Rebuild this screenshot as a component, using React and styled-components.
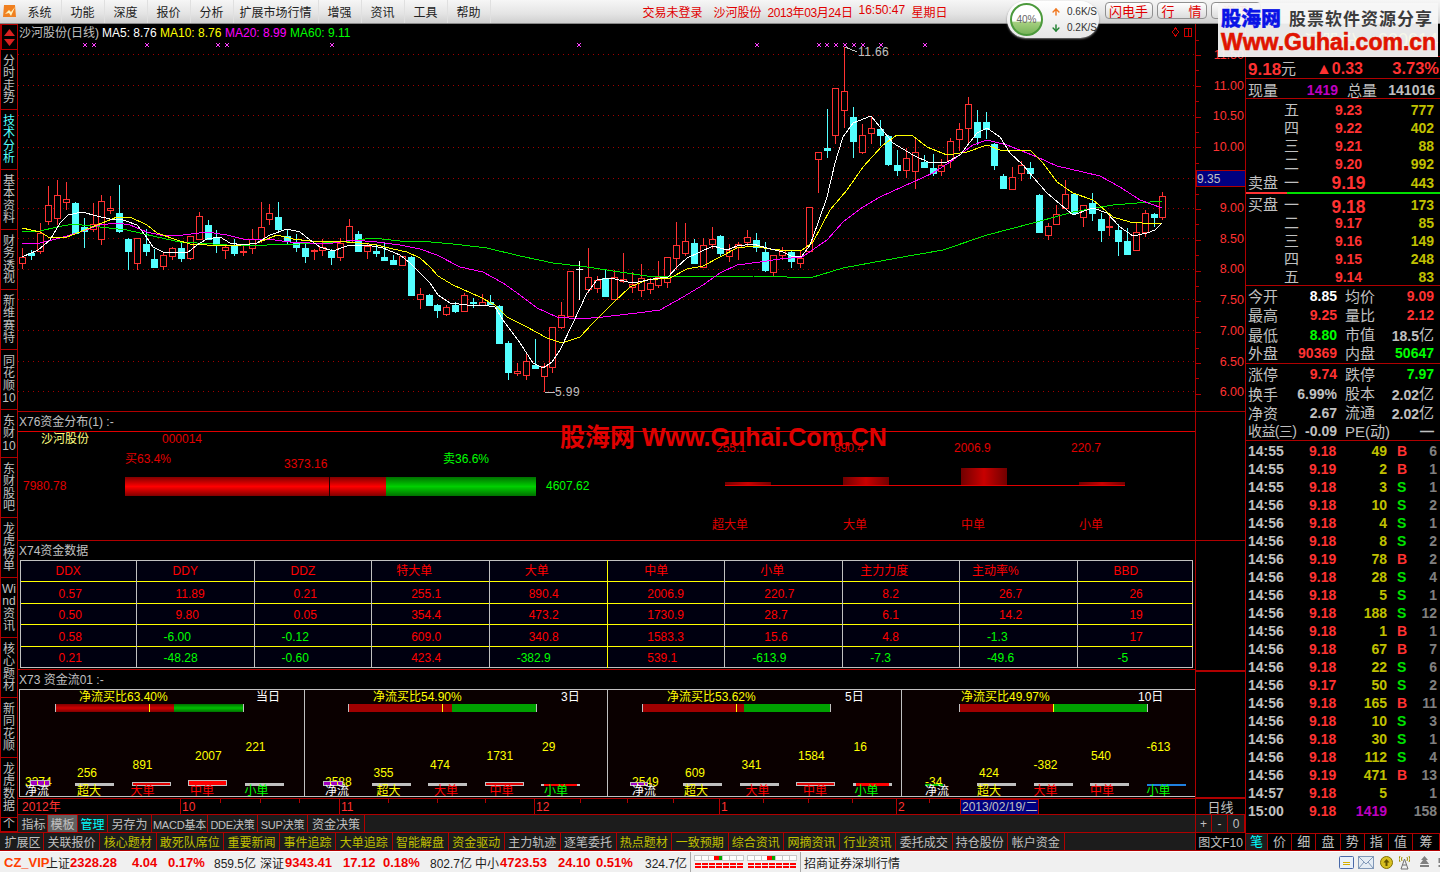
import styled, { createGlobalStyle } from "styled-components";
import { ArrowUp, ArrowDown } from "lucide-react";

const LINE = "#b00000";
const RED = "#ff3232";
const CYAN = "#54ffff";
const GREY = "#c0c0c0";
const OLIVE = "#c0c000";

// [x, wickTop, bodyTop, bodyBottom, wickBottom, red?]
const CANDLES = [
  [22, 248, 257, 263, 269, 1], [31, 250, 252, 255, 260, 0], [40, 223, 233, 251, 254, 1], [48, 186, 205, 221, 225, 1],
  [57, 180, 195, 218, 225, 1], [66, 182, 199, 202, 210, 1], [75, 202, 202, 233, 233, 0], [84, 218, 226, 231, 248, 0],
  [93, 203, 224, 229, 232, 1], [101, 195, 201, 239, 245, 1], [110, 196, 208, 210, 214, 1], [119, 185, 212, 231, 233, 0],
  [128, 238, 238, 251, 270, 0], [137, 238, 238, 263, 270, 1], [146, 229, 243, 251, 256, 0], [154, 249, 258, 267, 268, 0],
  [163, 252, 255, 266, 270, 1], [172, 247, 248, 256, 260, 1], [181, 243, 247, 258, 262, 0], [190, 236, 236, 258, 260, 1],
  [199, 212, 216, 239, 240, 1], [208, 220, 224, 239, 240, 0], [216, 230, 237, 244, 253, 0], [225, 245, 247, 250, 259, 1],
  [234, 239, 244, 253, 256, 0], [243, 245, 251, 252, 256, 1], [252, 229, 239, 248, 254, 1], [261, 202, 227, 239, 243, 1],
  [269, 204, 213, 219, 225, 1], [278, 202, 216, 229, 232, 0], [287, 230, 235, 241, 245, 0], [296, 234, 241, 247, 252, 0],
  [305, 243, 247, 256, 263, 0], [314, 249, 250, 251, 260, 1], [322, 239, 247, 250, 256, 1], [331, 249, 250, 257, 265, 0],
  [340, 238, 243, 257, 261, 1], [349, 219, 226, 242, 243, 1], [358, 231, 233, 251, 251, 0], [367, 243, 246, 251, 259, 1],
  [376, 245, 250, 253, 257, 0], [384, 242, 256, 260, 261, 0], [393, 255, 259, 264, 265, 0], [402, 256, 256, 265, 265, 1],
  [411, 256, 256, 295, 295, 0], [420, 288, 294, 299, 309, 1], [429, 294, 294, 305, 305, 0], [437, 304, 304, 310, 318, 0],
  [446, 305, 307, 314, 316, 1], [455, 302, 304, 311, 313, 0], [464, 293, 295, 311, 312, 1], [473, 298, 301, 303, 308, 0],
  [482, 294, 302, 305, 306, 1], [490, 295, 301, 304, 305, 0], [499, 305, 305, 343, 343, 0], [508, 341, 342, 372, 380, 0],
  [517, 363, 371, 373, 376, 1], [526, 353, 361, 375, 380, 1], [535, 339, 364, 368, 368, 0], [544, 363, 366, 376, 392, 1],
  [552, 327, 327, 367, 373, 1], [561, 302, 315, 327, 329, 1], [570, 271, 271, 316, 316, 1], [588, 248, 277, 289, 293, 1],
  [597, 276, 280, 288, 293, 1], [605, 270, 277, 296, 297, 0], [614, 270, 277, 299, 299, 1], [623, 253, 279, 281, 283, 1],
  [632, 272, 284, 287, 293, 1], [641, 264, 278, 290, 297, 1], [650, 278, 283, 289, 294, 1], [658, 261, 277, 285, 288, 1],
  [667, 257, 257, 282, 288, 1], [676, 222, 245, 258, 270, 1], [685, 223, 241, 253, 256, 1], [694, 239, 242, 263, 263, 0],
  [703, 238, 245, 267, 267, 1], [712, 227, 239, 244, 249, 1], [720, 235, 235, 253, 257, 0], [729, 244, 250, 256, 262, 1],
  [738, 242, 244, 247, 260, 1], [747, 230, 237, 242, 247, 1], [756, 233, 239, 247, 252, 0], [765, 242, 251, 270, 272, 0],
  [773, 255, 255, 272, 277, 1], [782, 247, 250, 255, 260, 1], [791, 250, 251, 261, 268, 0], [800, 250, 258, 263, 268, 1],
  [809, 207, 207, 251, 252, 1], [818, 152, 152, 159, 193, 1], [827, 109, 147, 150, 158, 0], [835, 88, 88, 135, 144, 1],
  [844, 47, 91, 110, 128, 1], [853, 107, 116, 141, 158, 0], [862, 124, 135, 152, 154, 1], [871, 117, 128, 133, 144, 1],
  [880, 120, 128, 135, 146, 0], [888, 135, 135, 164, 166, 0], [897, 150, 164, 170, 176, 0], [906, 148, 158, 170, 178, 1],
  [915, 137, 152, 171, 189, 1], [924, 155, 161, 167, 168, 0], [933, 154, 167, 173, 176, 0], [941, 159, 165, 171, 176, 1],
  [950, 138, 141, 160, 168, 1], [959, 123, 129, 139, 151, 1], [968, 97, 104, 128, 143, 1], [977, 110, 121, 137, 145, 0],
  [986, 112, 121, 129, 139, 0], [994, 143, 143, 165, 170, 0], [1003, 174, 175, 188, 189, 0], [1012, 167, 177, 189, 189, 1],
  [1021, 161, 165, 173, 181, 1], [1030, 162, 167, 173, 179, 0], [1039, 194, 194, 232, 232, 0], [1048, 223, 226, 235, 240, 1],
  [1056, 205, 214, 224, 225, 1], [1065, 180, 194, 208, 208, 1], [1074, 193, 193, 213, 215, 0], [1083, 205, 205, 217, 227, 1],
  [1092, 193, 202, 213, 221, 0], [1101, 213, 218, 230, 242, 0], [1109, 213, 226, 227, 236, 1], [1118, 224, 229, 241, 256, 0],
  [1127, 228, 240, 254, 254, 0], [1136, 222, 232, 250, 251, 1], [1145, 210, 213, 232, 237, 1], [1154, 213, 213, 217, 227, 0],
  [1162, 192, 196, 217, 220, 1],
];

const MA5 = "22,257 38,250 50,240 60,223 68,215 82,212 97,216 110,219 123,220 137,225 145,235 153,247 163,252 177,252 187,253 197,245 207,239 220,237 230,243 243,245 257,243 270,235 287,229 300,232 310,240 320,247 333,251 347,246 367,245 383,248 400,255 410,263 420,273 430,283 438,295 450,303 467,305 483,305 495,307 503,320 520,343 533,363 543,368 552,362 560,350 573,323 587,293 597,280 610,278 633,283 653,279 668,277 677,267 687,258 700,252 713,246 727,250 737,246 753,244 767,248 783,252 793,257 802,256 810,245 818,223 827,197 835,163 843,137 853,123 871,116 880,127 893,143 913,155 930,163 947,162 960,155 977,133 987,128 1000,137 1010,153 1023,165 1033,177 1047,193 1073,215 1093,208 1107,213 1120,227 1133,236 1147,233 1155,230 1162,223";
const MA10 = "22,228 40,232 50,238 67,237 80,232 97,225 117,217 130,217 147,225 157,233 177,240 190,244 207,245 233,246 257,243 277,235 293,239 310,241 333,241 360,243 377,245 393,249 407,252 420,258 430,267 438,276 453,285 480,297 495,305 507,317 527,327 547,338 562,343 580,337 593,323 613,303 630,287 647,280 670,278 687,269 703,266 720,257 737,248 753,246 770,249 790,251 802,250 813,242 830,210 847,190 863,167 883,145 897,135 913,136 927,147 947,155 967,152 987,145 1000,150 1030,150 1043,163 1057,182 1073,193 1093,200 1113,217 1130,222 1153,224 1162,223";
const MA20 = "22,243 40,243 60,238 80,232 100,225 117,223 130,225 147,232 160,235 183,235 207,232 227,235 243,239 267,239 290,242 310,243 333,243 353,240 377,242 400,245 420,249 437,255 460,267 483,272 503,283 520,295 537,308 557,317 580,319 603,317 637,313 660,310 683,297 703,285 720,273 737,265 760,262 780,259 802,257 827,240 843,222 863,207 880,197 913,182 933,173 953,160 973,145 987,140 1007,145 1037,157 1057,166 1083,172 1100,176 1120,187 1140,200 1162,208";
const MA60 = "22,232 40,231 57,227 73,224 100,227 127,230 157,237 180,242 213,244 240,246 267,245 300,244 323,243 350,241 373,238 400,241 420,241 453,244 487,248 520,256 553,263 587,267 620,272 647,276 687,276 753,276 787,277 810,278 843,268 897,258 943,250 987,235 1033,223 1073,212 1113,205 1162,201";

const GRID_Y = [54, 85, 115, 147, 178, 208, 238, 269, 299, 330, 361, 391];
const MARKS = [85, 94, 147, 218, 227, 332, 579, 757, 819, 827, 836, 845, 854, 863, 881, 925];
const AXIS_LABELS = [["11.50", 55], ["11.00", 86], ["10.50", 116], ["10.00", 147], ["9.00", 208], ["8.50", 239], ["8.00", 269], ["7.50", 300], ["7.00", 331], ["6.50", 362], ["6.00", 392]];

const RAIL = [
  { chars: ["分", "时", "走", "势"] },
  { chars: ["技", "术", "分", "析"], active: true },
  { chars: ["基", "本", "资", "料"] },
  { chars: ["财", "务", "透", "视"] },
  { chars: ["新", "维", "赛", "特"] },
  { chars: ["同", "花", "顺", "10"] },
  { chars: ["东", "财", "10"], h: 48 },
  { chars: ["东", "财", "股", "吧"] },
  { chars: ["龙", "虎", "榜", "单"] },
  { chars: ["Wi", "nd", "资", "讯"] },
  { chars: ["核", "心", "题", "材"] },
  { chars: ["新", "同", "花", "顺"] },
  { chars: ["龙", "虎", "数", "据"] },
  { chars: ["个"], h: 14 },
];

const COL_WIDTHS = [116, 118, 117.5, 117.5, 118.5, 117, 118, 116.5, 118.5, 114.5];
const HEAD = [["DDX", 35], ["DDY", 36], ["DDZ", 36], ["特大单", 24], ["大单", 35], ["中单", 36], ["小单", 35], ["主力力度", 17], ["主动率%", 12], ["BBD", 35]];
const ROWS = [
  ["0.57", "11.89", "0.21", "255.1", "890.4", "2006.9", "220.7", "8.2", "26.7", "26"],
  ["0.50", "9.80", "0.05", "354.4", "473.2", "1730.9", "28.7", "6.1", "14.2", "19"],
  ["0.58", "-6.00", "-0.12", "609.0", "340.8", "1583.3", "15.6", "4.8", "-1.3", "17"],
  ["0.21", "-48.28", "-0.60", "423.4", "-382.9", "539.1", "-613.9", "-7.3", "-49.6", "-5"],
];

const FLOW = [
  { name: "超大单", value: "255.1", h: 3, dx: -13, vdx: -9 },
  { name: "大单", value: "890.4", h: 8, dx: 0, vdx: -9 },
  { name: "中单", value: "2006.9", h: 17, dx: 0, vdx: -7 },
  { name: "小单", value: "220.7", h: 3, dx: 0, vdx: -8 },
];

const CENTERS = [781, 772, 764, 755, 746];
const NAMES = [["净流", "#fff"], ["超大", "#ffff00"], ["大单", "#ff0000"], ["中单", "#ff0000"], ["小单", "#00ff00"]];
const CELLS = [
  {
    title: "净流买比63.40%", day: "当日", titleX: 59, titleW: 177, barX: 35, red: 118, grad: true, pad: 5, first: 32.5, cols: [
      { v: "3374", vdx: 0, ldx: 0, bdx: 5, bw: 20, h: 6, kind: "net" },
      { v: "256", vdx: 2, ldx: 2, h: 3, kind: "grey" }, { v: "891", vdx: 1, ldx: -1, h: 4, kind: "outline" },
      { v: "2007", vdx: 7, ldx: 2, h: 6, kind: "fill" }, { v: "221", vdx: 1, ldx: 0, h: 3, kind: "grey" }],
  },
  {
    title: "净流买比54.90%", day: "3日", titleX: 68, titleW: 188, barX: 43, red: 103, pad: 20, first: 29, cols: [
      { v: "2588", vdx: 0, ldx: 0, bdx: -2, bw: 20, h: 5, kind: "net" },
      { v: "355", vdx: 2, ldx: 5, h: 3, kind: "grey" }, { v: "474", vdx: 2, ldx: 6, h: 3, kind: "grey" },
      { v: "1731", vdx: 2, ldx: 5, h: 4, kind: "outline" }, { v: "29", vdx: 1, ldx: 3, h: 2, kind: "line" }],
  },
  {
    title: "净流买比53.62%", day: "5日", titleX: 59, titleW: 178, barX: 34, red: 101, pad: 24, first: 33.5, cols: [
      { v: "2549", vdx: 0, ldx: 0, bdx: -2, bw: 18, h: 4, kind: "net" },
      { v: "609", vdx: 2, ldx: 1, h: 3, kind: "grey" }, { v: "341", vdx: 2, ldx: 6, h: 3, kind: "grey" },
      { v: "1584", vdx: 2, ldx: 7, h: 4, kind: "outline" }, { v: "16", vdx: 1, ldx: 2, h: 3, kind: "line" }],
  },
  {
    title: "净流买比49.97%", day: "10日", titleX: 59, titleW: 177, barX: 57, red: 94, pad: 23, first: 34.5, cols: [
      { v: "-34", vdx: 0, ldx: 0, bdx: 0, bw: 18, h: 2, kind: "netline" },
      { v: "424", vdx: 2, ldx: 0, h: 3, kind: "grey" }, { v: "-382", vdx: 0, ldx: 0, h: 3, kind: "grey" },
      { v: "540", vdx: 1, ldx: 0, h: 3, kind: "grey" }, { v: "-613", vdx: 0, ldx: 0, h: 2, kind: "blue" }],
  },
];

const TOOLS = [["指标", 28], ["模板", 30, "on"], ["管理", 30, "cyan"], ["另存为", 44], ["MACD基本", 56, "small"], ["DDE决策", 50, "small"], ["SUP决策", 50, "small"], ["资金决策", 57]];
const EXT = [["扩展区", 42], ["关联报价", 56], ["核心题材", 56.5, 1], ["敢死队席位", 67.5, 1], ["重要新闻", 56, 1], ["事件追踪", 56, 1], ["大单追踪", 56.5, 1], ["智能解盘", 56, 1], ["资金驱动", 56.5, 1], ["主力轨迹", 55.5], ["逐笔委托", 56], ["热点题材", 55.5, 1], ["一致预期", 56.5, 1], ["综合资讯", 55.5, 1], ["网摘资讯", 56, 1], ["行业资讯", 56, 1], ["委托成交", 56.5], ["持仓股份", 55.5], ["帐户资金", 56.5]];

const SELL = [["五", "9.23", "777"], ["四", "9.22", "402"], ["三", "9.21", "88"], ["二", "9.20", "992"]];
const BUY = [["二", "9.17", "85"], ["三", "9.16", "149"], ["四", "9.15", "248"], ["五", "9.14", "83"]];

const TRADES = [
  ["14:55", "9.18", "49", "B", "6"], ["14:55", "9.19", "2", "B", "1"], ["14:55", "9.18", "3", "S", "1"], ["14:56", "9.18", "10", "S", "2"],
  ["14:56", "9.18", "4", "S", "1"], ["14:56", "9.18", "8", "S", "2"], ["14:56", "9.19", "78", "B", "2"], ["14:56", "9.18", "28", "S", "4"],
  ["14:56", "9.18", "5", "S", "1"], ["14:56", "9.18", "188", "S", "12"], ["14:56", "9.18", "1", "B", "1"], ["14:56", "9.18", "67", "B", "7"],
  ["14:56", "9.18", "22", "S", "6"], ["14:56", "9.17", "50", "S", "2"], ["14:56", "9.18", "165", "B", "11"], ["14:56", "9.18", "10", "S", "3"],
  ["14:56", "9.18", "30", "S", "1"], ["14:56", "9.18", "112", "S", "4"], ["14:56", "9.19", "471", "B", "13"], ["14:57", "9.18", "5", "", "1"],
  ["15:00", "9.18", "1419", "", "158"],
];

const STATUS = [
  ["CZ_VIP", 42, "vip"], ["上证", 24], ["2328.28", 62, "red"], ["4.04", 36, "red"], ["0.17%", 46, "red"], ["859.5亿", 46],
  ["深证", 25], ["9343.41", 58, "red"], ["17.12", 40, "red"], ["0.18%", 47, "red"], ["802.7亿", 45],
  ["中小", 25], ["4723.53", 58, "red"], ["24.10", 38, "red"], ["0.51%", 49, "red"], ["324.7亿", 45],
];

const GlobalStyle = createGlobalStyle`
  html, body { margin: 0; padding: 0; background: #000; }
  * { box-sizing: border-box; }
  body { font-family: "Liberation Sans", "Noto Sans CJK SC", sans-serif; font-size: 12px; }
`;

const Root = styled.div`
  position: relative;
  width: 1440px;
  height: 872px;
  overflow: hidden;
  display: flex;
  flex-direction: column;
  background: #000;
  color: ${GREY};
`;

/* ---------- top menu ---------- */
const MenuBar = styled.div`
  height: 24px;
  flex: none;
  display: flex;
  align-items: center;
  background: linear-gradient(#f6f6f6, #e4e4e4 60%, #cfcfcf);
  border-bottom: 1px solid #888;
  color: #222;
`;
const AppIcon = styled.div`
  width: 18.5px;
  flex: none;
  display: flex;
  justify-content: center;
`;
const MenuItem = styled.div`
  width: ${(p) => p.$w || 43}px;
  height: 100%;
  flex: none;
  display: flex;
  align-items: center;
  justify-content: center;
  border-right: 1px solid #e0e0e0;
`;
const MenuStatus = styled.div`
  width: 305px;
  margin-left: 152px;
  flex: none;
  display: flex;
  color: #e00000;
  white-space: nowrap;
`;
const MenuStat = styled.span`
  width: ${(p) => p.$w}px;
  flex: none;
  letter-spacing: ${(p) => p.$ls || 0}px;
`;
const QuickButton = styled.div`
  width: ${(p) => p.$w}px;
  height: 17px;
  margin-left: ${(p) => p.$ml}px;
  margin-bottom: 3px;
  flex: none;
  display: flex;
  align-items: center;
  justify-content: center;
  gap: ${(p) => p.$gap || 0}px;
  border: 1px solid #909090;
  border-radius: 4px;
  background: linear-gradient(#ffffff, #dcdcdc);
  color: #e00000;
  font-size: 13px;
`;
const SpeedWidget = styled.div`
  position: absolute;
  left: 1007px;
  top: 1px;
  width: 92px;
  height: 37px;
  z-index: 3;
  display: flex;
  align-items: center;
  gap: 4px;
  padding-left: 3px;
  border-radius: 19px;
  background: linear-gradient(#ffffff, #e6e6e6);
  box-shadow: 0 1px 2px #777;
  color: #333;
  font-size: 10px;
`;
const SpeedDial = styled.div`
  width: 33px;
  height: 33px;
  flex: none;
  display: flex;
  align-items: center;
  justify-content: center;
  border: 2px solid #4c9a3c;
  border-radius: 50%;
  background: linear-gradient(#fff 55%, #a6d080 60%, #78b45a);
  color: #666;
  font-size: 10px;
`;
const SpeedRows = styled.div`
  display: flex;
  flex-direction: column;
  gap: 4px;
`;
const SpeedRow = styled.div`
  display: flex;
  align-items: center;
  gap: 6px;
  height: 12px;
  padding-left: 4px;
`;
const Watermark = styled.div`
  position: absolute;
  left: 1218px;
  top: 3px;
  width: 220px;
  height: 54px;
  z-index: 4;
  padding: 5px 3px 0;
  background: rgba(246, 246, 246, 0.94);
`;
const WatermarkTop = styled.div`
  display: flex;
  align-items: center;
  gap: 8px;
  height: 23px;
`;
const WatermarkCn = styled.span`
  color: #0a14e6;
  font-size: 20px;
  font-weight: 900;
  line-height: 23px;
  -webkit-text-stroke: 0.4px #0a14e6;
`;
const WatermarkSlogan = styled.span`
  color: #3c3c3c;
  font-size: 17px;
  font-weight: 700;
  line-height: 20px;
  letter-spacing: 1px;
  white-space: nowrap;
`;
const WatermarkUrl = styled.div`
  color: #e01400;
  font-size: 23px;
  font-weight: 900;
  line-height: 22px;
  white-space: nowrap;
  -webkit-text-stroke: 0.6px #e01400;
`;
const CenterMark = styled.div`
  position: absolute;
  left: 560px;
  top: 421px;
  z-index: 2;
  color: #e00000;
  font-size: 25px;
  font-weight: 700;
  line-height: 32px;
  white-space: nowrap;
`;

/* ---------- body ---------- */
const Body = styled.div`
  flex: 1;
  display: flex;
  min-height: 0;
`;
const LeftSide = styled.div`
  width: 1246px;
  flex: none;
  display: flex;
  flex-direction: column;
`;
const WorkRow = styled.div`
  height: 808px;
  display: flex;
`;
const Rail = styled.div`
  width: 18px;
  flex: none;
  display: flex;
  flex-direction: column;
`;
const RailArrows = styled.div`
  height: 26px;
  flex: none;
  display: flex;
  flex-direction: column;
  align-items: center;
  justify-content: center;
  gap: 3px;
  border: 1px solid ${LINE};
  border-left-width: 2px;
`;
const RailTab = styled.div`
  height: ${(p) => p.$h}px;
  flex: none;
  overflow: hidden;
  display: flex;
  flex-direction: column;
  align-items: center;
  justify-content: ${(p) => (p.$h < 20 ? "flex-start" : "center")};
  border-right: 1px solid ${LINE};
  border-bottom: 1px solid ${LINE};
  border-left: 1px solid ${LINE};
  color: ${(p) => (p.$active ? CYAN : GREY)};
  line-height: 12.5px;
`;
const Center = styled.div`
  width: 1177px;
  flex: none;
  display: flex;
  flex-direction: column;
`;
const ChartPane = styled.div`
  position: relative;
  height: 388px;
  flex: none;
  border-bottom: 1px solid ${LINE};
`;
const ChartSvg = styled.svg`
  display: block;
  flex: none;
`;
const Legend = styled.div`
  position: absolute;
  left: 1px;
  top: 2px;
  display: flex;
  line-height: 14px;
  white-space: nowrap;
`;
const LegendItem = styled.span`
  width: ${(p) => p.$w}px;
  color: ${(p) => p.$c};
`;
const PaneTitle = styled.div`
  height: ${(p) => p.$h}px;
  flex: none;
  padding: 0 0 3px 1px;
  display: flex;
  align-items: center;
  border-bottom: ${(p) => (p.$line ? "1px solid #e00000" : "none")};
  color: ${GREY};
`;
const FlowPane = styled.div`
  height: 109px;
  flex: none;
  display: flex;
  border-bottom: 1px solid ${LINE};
`;
const FlowLeft = styled.div`
  width: 700px;
  flex: none;
`;
const NameRow = styled.div`
  height: 12px;
  margin-top: 1px;
  padding-left: 23px;
  display: grid;
  grid-template-columns: 121px auto;
  line-height: 12px;
`;
const StockName = styled.span`
  color: #ffff80;
`;
const StockCode = styled.span`
  color: #e00000;
`;
const RatioLabels = styled.div`
  height: 17px;
  margin-top: 8px;
  padding-left: 107px;
  display: grid;
  grid-template-columns: 159px 159px auto;
  line-height: 12px;
`;
const RatioLabel = styled.span`
  color: ${(p) => p.$c};
  padding-top: ${(p) => p.$top || 0}px;
`;
const RatioRow = styled.div`
  margin-top: 6px;
  padding-left: 5px;
  display: flex;
  align-items: center;
  line-height: 21px;
`;
const RatioValue = styled.span`
  color: ${(p) => p.$c};
  width: ${(p) => p.$w || 60}px;
  margin-left: ${(p) => p.$ml || 0}px;
  flex: none;
`;
const BigBar = styled.div`
  width: 411px;
  height: 19px;
  flex: none;
  display: flex;
`;
const BigRed = styled.div`
  width: ${(p) => p.$w}px;
  flex: none;
  background: linear-gradient(#800000, #ff0000 50%, #800000);
  border-right: ${(p) => (p.$split ? "1px solid #200000" : "none")};
`;
const BigGreen = styled.div`
  flex: 1;
  background: linear-gradient(#007000, #00d000 50%, #007000);
`;
const FlowRight = styled.div`
  flex: 1;
  padding: 10px 0 0 7px;
`;
const FlowGrid = styled.div`
  width: 400px;
  display: grid;
  grid-template-columns: repeat(4, 118px);
  color: #e00000;
  line-height: 12px;
`;
const FlowText = styled.span`
  margin-left: ${(p) => p.$dx}px;
`;
const FlowPlot = styled(FlowGrid)`
  height: 32px;
  align-items: end;
  border-bottom: 1px solid #e00000;
`;
const FlowBar = styled.div`
  width: 46px;
  height: ${(p) => p.$h}px;
  background: linear-gradient(90deg, #700000, #c80000 50%, #700000);
`;
const FlowNames = styled(FlowGrid)`
  margin-top: 33px;
`;
const TableWrap = styled.div`
  height: 110px;
  flex: none;
  padding-left: 1.5px;
  border-bottom: 1px solid ${LINE};
`;
const DataTable = styled.table`
  width: 1173.5px;
  height: 107px;
  table-layout: fixed;
  border-collapse: collapse;
  background: #000010;
  border: 1px solid ${GREY};
`;
const TableCol = styled.col`
  width: ${(p) => p.$w}px;
`;
const TableRow = styled.tr`
  height: 21.4px;
`;
const Cell = styled.td`
  height: 21.4px;
  padding: 3px 0 0 ${(p) => p.$pad}px;
  border-top: 1px solid #ffff00;
  border-left: 1px solid ${(p) => (p.$yellow ? "#ffff00" : GREY)};
  color: ${(p) => (p.$neg ? "#00ff00" : "#ff0000")};
  text-align: left;
  white-space: nowrap;
  line-height: 12px;
`;
const HeadCell = styled(Cell).attrs({ as: "th" })`
  padding-top: 0;
  border-top: none;
  color: #ff0000;
  font-weight: 400;
`;
const FlowBoard = styled.div`
  height: 108px;
  flex: none;
  margin-left: 1px;
  display: grid;
  grid-template-columns: 285px 303px 294px 294px;
  background: #0a0000;
  border-top: 1px solid ${GREY};
  border-bottom: 1px solid ${GREY};
`;
const BoardCell = styled.div`
  display: flex;
  flex-direction: column;
  min-width: 0;
  border-left: 1px solid ${GREY};
`;
const BoardHead = styled.div`
  height: 14px;
  padding-left: ${(p) => p.$x}px;
  display: grid;
  grid-template-columns: ${(p) => p.$w}px auto;
  line-height: 15px;
`;
const BoardTitle = styled.span`
  color: #ffff00;
  white-space: nowrap;
`;
const BoardDay = styled.span`
  color: #fff;
`;
const MiniRatio = styled.div`
  position: relative;
  width: 188.5px;
  height: 8px;
  margin-left: ${(p) => p.$x}px;
  flex: none;
  display: flex;
  border-left: 1px solid ${GREY};
  border-right: 1px solid ${GREY};
  &::after {
    content: "";
    position: absolute;
    left: 93px;
    top: 0;
    width: 1px;
    height: 8px;
    background: #ffff00;
  }
`;
const MiniRed = styled.div`
  width: ${(p) => p.$w}px;
  flex: none;
  background: ${(p) => (p.$grad ? "linear-gradient(#800000, #d00000 50%, #800000)" : "#a00000")};
`;
const MiniGreen = styled.div`
  flex: 1;
  background: ${(p) => (p.$grad ? "linear-gradient(#007000, #00c000 50%, #007000)" : "#00a000")};
`;
const BoardCols = styled.div`
  margin-top: auto;
  padding-left: ${(p) => p.$pad}px;
  display: grid;
  grid-template-columns: ${(p) => p.$first}px repeat(4, 39px);
  column-gap: 17.5px;
  align-items: end;
`;
const BoardCol = styled.div`
  display: flex;
  flex-direction: column;
  min-width: 0;
`;
const BoardValue = styled.span`
  margin-left: ${(p) => p.$dx}px;
  margin-bottom: ${(p) => p.$mb}px;
  color: #ffff00;
  line-height: 12px;
  white-space: nowrap;
`;
const kindStyles = {
  grey: `background: ${GREY};`,
  outline: `background: #e00000; border: 1px solid ${GREY};`,
  fill: `background: #ff0000; border: 1px solid ${GREY};`,
  line: `background: #ff0000; border-left: 3px solid ${GREY}; border-right: 3px solid ${GREY};`,
  blue: `background: #2080e0;`,
  net: `background: repeating-linear-gradient(90deg, #a000c0 0 6px, #ffff00 6px 7px); border: 1px solid ${GREY};`,
  netline: `background: #00c000;`,
};
const BoardBar = styled.div`
  position: relative;
  width: ${(p) => p.$w || 39}px;
  height: ${(p) => p.$h}px;
  margin-left: ${(p) => p.$dx || 0}px;
  margin-bottom: -1px;
  flex: none;
  ${(p) => kindStyles[p.$kind]}
`;
const BoardName = styled.span`
  position: relative;
  margin-left: ${(p) => p.$dx}px;
  height: 11px;
  color: ${(p) => p.$c};
  line-height: 12px;
  white-space: nowrap;
`;
const ToolBar = styled.div`
  height: 17px;
  flex: none;
  padding-left: 2px;
  display: flex;
  background: #1c1c1c;
`;
const ToolButton = styled.div`
  width: ${(p) => p.$w}px;
  flex: none;
  display: flex;
  align-items: center;
  justify-content: center;
  border-right: 1px solid ${LINE};
  background: ${(p) => (p.$mode === "on" ? "#606060" : "#1c1c1c")};
  color: ${(p) => (p.$mode === "cyan" ? "#00ffff" : GREY)};
  font-size: ${(p) => (p.$mode === "small" ? 11 : 12)}px;
  letter-spacing: ${(p) => (p.$mode === "small" ? -0.2 : 0)}px;
  white-space: nowrap;
  overflow: hidden;
`;

/* ---------- price axis ---------- */
const AxisCol = styled.div`
  width: 51px;
  flex: none;
  display: flex;
  flex-direction: column;
  border-left: 1px solid ${LINE};
  border-right: 1px solid ${LINE};
`;
const AxisBox = styled.div`
  height: 129px;
  flex: none;
  border: 2px solid ${LINE};
  border-right: none;
  border-left: none;
`;
const AxisLabel = styled.div`
  height: 16px;
  flex: none;
  display: flex;
  align-items: center;
  justify-content: center;
  border-bottom: 1px solid ${LINE};
  font-size: 13px;
`;
const ZoomRow = styled.div`
  flex: 1;
  display: grid;
  grid-template-columns: 16px 16px 1fr;
  background: #1c1c1c;
`;
const ZoomButton = styled.div`
  display: flex;
  align-items: center;
  justify-content: center;
  border-right: 1px solid ${LINE};
`;

/* ---------- extension bar ---------- */
const ExtRow = styled.div`
  height: 19px;
  flex: none;
  display: flex;
  border-top: 1px solid ${LINE};
  border-bottom: 1px solid ${LINE};
`;
const ExtBar = styled.div`
  width: 1195px;
  flex: none;
  display: flex;
  padding-left: 2px;
  background: #1c1c1c;
`;
const ExtTab = styled.div`
  width: ${(p) => p.$w}px;
  flex: none;
  display: flex;
  align-items: center;
  justify-content: center;
  border-right: 1px solid ${LINE};
  color: ${(p) => (p.$gold ? OLIVE : GREY)};
  white-space: nowrap;
`;
const F10Tab = styled.div`
  width: 51px;
  flex: none;
  display: flex;
  align-items: center;
  justify-content: center;
  border-left: 1px solid ${LINE};
  border-right: 1px solid ${LINE};
  background: #000;
  white-space: nowrap;
`;

/* ---------- right quote panel ---------- */
const Quote = styled.div`
  width: 194px;
  flex: none;
  display: flex;
  flex-direction: column;
  font-size: 15px;
`;
const Section = styled.div`
  height: ${(p) => p.$h}px;
  flex: none;
  padding-left: 2px;
  padding-top: ${(p) => p.$top || 0}px;
  border-bottom: 1px solid ${LINE};
`;
const BuySection = styled(Section)`
  padding-left: 0;
`;
const NameHead = styled(Section)`
  display: flex;
  align-items: center;
  gap: 20px;
  padding-left: 40px;
  color: #ffff00;
  font-size: 18px;
  white-space: nowrap;
`;
const PriceRow = styled(Section)`
  display: grid;
  grid-template-columns: 68px 60px 1fr;
  align-items: center;
  padding-right: 1px;
  padding-bottom: 3px;
`;
const Num = styled.span`
  color: ${(p) => p.$c || GREY};
  font-size: ${(p) => p.$size || 14}px;
  font-weight: 700;
  text-align: ${(p) => p.$align || "left"};
  white-space: nowrap;
  padding-top: ${(p) => p.$drop || 0}px;
`;
const Unit = styled.span`
  color: ${GREY};
  font-size: 15px;
  font-weight: 400;
  vertical-align: 1px;
`;
const VolumeRow = styled(Section)`
  display: grid;
  grid-template-columns: 30px 60px 39px 1fr;
  align-items: center;
  padding-right: 5px;
  padding-bottom: 3px;
`;
const TotalLabel = styled.span`
  grid-column: 3;
  padding-left: 9px;
`;
const BookRow = styled.div`
  height: ${(p) => p.$h || 18}px;
  padding-left: 2px;
  display: grid;
  grid-template-columns: 36px 20px 89px 41px;
  align-items: center;
  line-height: 18px;
`;
const BookSide = styled.div`
  height: ${(p) => p.$h}px;
  flex: none;
  padding-top: ${(p) => p.$top || 0}px;
`;
const Divider = styled.div`
  height: 2px;
  flex: none;
  display: flex;
  background: #00e000;
`;
const DividerRed = styled.div`
  width: 41px;
  background: ${RED};
`;
const StatRow = styled.div`
  height: 19px;
  display: grid;
  grid-template-columns: 89px 89px;
  column-gap: 8px;
  align-items: center;
  line-height: 19px;
`;
const StatCell = styled.div`
  display: flex;
  justify-content: space-between;
  white-space: nowrap;
`;
const TightLabel = styled.span`
  font-size: 14px;
  letter-spacing: -0.6px;
`;
const Trades = styled.div`
  flex: 1;
  min-height: 0;
  padding-top: 1px;
`;
const TradeRow = styled.div`
  height: 18px;
  padding-left: 2px;
  display: grid;
  grid-template-columns: 61px 30px 48px 10px 8px 32px;
  align-items: center;
  font-size: 14px;
  font-weight: 700;
`;
const TradeFlag = styled.span`
  grid-column: 5;
  color: ${(p) => (p.$flag === "B" ? RED : "#00e000")};
`;
const TradeCount = styled.span`
  grid-column: 6;
  color: #808080;
  text-align: right;
`;
const QuoteTabs = styled.div`
  height: 18px;
  flex: none;
  display: grid;
  grid-template-columns: 22px repeat(6, 24.2px) 1fr;
  border-top: 1px solid ${LINE};
  border-bottom: 1px solid ${LINE};
`;
const QuoteTab = styled.div`
  display: flex;
  align-items: center;
  justify-content: center;
  border-right: 1px solid ${LINE};
  background: ${(p) => (p.$on ? "#1c1c1c" : "#000")};
  color: ${(p) => (p.$on ? "#00ffff" : GREY)};
  font-size: 13px;
  line-height: 14px;
`;

/* ---------- status bar ---------- */
const StatusBar = styled.div`
  height: 21px;
  flex: none;
  padding-left: 4px;
  display: flex;
  align-items: center;
  background: #f0f0f0;
  border-top: 1px solid #fff;
  color: #222;
`;
const StatusText = styled.span`
  width: ${(p) => p.$w}px;
  flex: none;
  white-space: nowrap;
  font-size: ${(p) => (p.$kind ? 13 : 12)}px;
  font-weight: ${(p) => (p.$kind ? 700 : 400)};
  color: ${(p) => (p.$kind === "vip" ? "#ff4000" : p.$kind === "red" ? "#f00000" : "#222")};
`;
const StatusSep = styled.div`
  width: 1px;
  height: 100%;
  flex: none;
  margin-right: ${(p) => p.$mr}px;
  background: #a8a8a8;
`;
const MeterSvg = styled.svg`
  flex: none;
  margin-right: 3px;
`;
const StatusNote = styled.span`
  width: 535px;
  flex: none;
  margin-left: 3px;
`;
const StatusIcons = styled.div`
  display: flex;
  align-items: center;
  gap: 3px;
`;
const TrayGlyph = styled.svg`
  flex: none;
  margin-left: ${(p) => p.$ml || 0}px;
`;

function Triangle({ down }) {
  return (
    <svg width="11" height="7" viewBox="0 0 11 7">
      <polygon points={down ? "0,0 11,0 5.5,7" : "5.5,0 11,7 0,7"} fill="#d82020" />
    </svg>
  );
}

function MiniMeter() {
  const cells = [0, 1, 2, 3, 4, 5, 6];
  return (
    <MeterSvg width="50" height="14" viewBox="0 0 50 14" shapeRendering="crispEdges">
      <rect x="0.5" y="0.5" width="49" height="5" fill="#fff" stroke="#c8c8c8" />
      {cells.map((i) => (
        <line key={i} x1={i * 7 + 0.5} y1="0" x2={i * 7 + 0.5} y2="6" stroke="#c8c8c8" />
      ))}
      <rect x="20" y="1" width="5" height="4" fill="#f00" />
      <rect x="25" y="1" width="3" height="4" fill="#0a0" />
      {cells.map((i) => (
        <g key={i}>
          <rect x={i * 7 + 0.5} y="8" width="6" height="2" fill="#f00" />
          <rect x={i * 7 + 0.5} y="11" width="6" height="2" fill="#f00" />
        </g>
      ))}
    </MeterSvg>
  );
}

function TrayIcons() {
  return (
    <StatusIcons>
      <TrayGlyph width="15" height="13" viewBox="0 0 15 13">
        <rect x="0.5" y="0.5" width="14" height="12" rx="1" fill="#e8f0fa" stroke="#4868a8" />
        <rect x="4" y="6" width="7" height="1" fill="#d8b000" />
        <rect x="4" y="8" width="7" height="1" fill="#d8b000" />
      </TrayGlyph>
      <TrayGlyph $ml={1} width="16" height="13" viewBox="0 0 16 13">
        <rect x="0.5" y="0.5" width="15" height="12" fill="#e4ecf4" stroke="#8098b8" />
        <path d="M1 1 L8 8 L15 1 M1 12 L6 6 M15 12 L10 6" fill="none" stroke="#8098b8" />
      </TrayGlyph>
      <TrayGlyph $ml={3} width="13" height="13" viewBox="0 0 13 13">
        <circle cx="6.5" cy="6.5" r="6" fill="#d8c020" stroke="#807000" />
        <path d="M6.5 3 L9.5 6.5 H7.5 V10 H5.5 V6.5 H3.5 Z" fill="#605000" />
      </TrayGlyph>
      <TrayGlyph $ml={3} width="11" height="15" viewBox="0 0 11 15">
        <path d="M1 1 Q-1 4 1 7 M3 2 Q2 4 3 6 M10 1 Q12 4 10 7 M8 2 Q9 4 8 6" fill="none" stroke="#a09000" />
        <path d="M5.5 4 L2 14 H9 Z M3.5 10 H7.5" fill="none" stroke="#707070" />
      </TrayGlyph>
      <TrayGlyph $ml={7} width="9" height="12" viewBox="0 0 9 12">
        <path d="M4.5 0 L8 4 H6 L9 8 H0 L3 4 H1 Z M0 9 H9 V11 H0 Z" fill="#808080" />
      </TrayGlyph>
      <TrayGlyph $ml={6} width="3" height="9" viewBox="0 0 3 9">
        <path d="M0.5 0 H2.5 V5 H0.5 Z M0.5 7 H2.5 V9 H0.5 Z" fill="#808080" />
      </TrayGlyph>
    </StatusIcons>
  );
}

function MainChart() {
  return (
    <ChartSvg width="1177" height="387" viewBox="18 24 1177 387">
      <g shapeRendering="crispEdges">
        {GRID_Y.map((y) => (
          <line key={y} x1="18" y1={y + 0.5} x2="1195" y2={y + 0.5} stroke="#a00000" strokeDasharray="1 4" />
        ))}
        {CANDLES.map(([x, hi, top, bot, lo, up]) => {
          const c = up ? RED : CYAN;
          return (
            <g key={x}>
              <line x1={x + 0.5} y1={hi} x2={x + 0.5} y2={lo} stroke={c} />
              <rect x={x - 3} y={top + 0.5} width={up ? 6 : 7} height={Math.max(bot - top, 1)} fill={up ? "#000" : c} stroke={up ? c : "none"} />
            </g>
          );
        })}
        <line x1="579.5" y1="261" x2="579.5" y2="300" stroke="#fff" />
        <line x1="576" y1="269.5" x2="583" y2="269.5" stroke="#fff" />
        <polyline points={MA60} fill="none" stroke="#00e800" />
        <polyline points={MA20} fill="none" stroke="#ff00ff" />
        <polyline points={MA10} fill="none" stroke="#ffff00" />
        <polyline points={MA5} fill="none" stroke="#ffffff" />
        {MARKS.map((x) => (
          <path key={x} d={`M${x - 2} 43 L${x + 2} 47 M${x + 2} 43 L${x - 2} 47`} stroke="#ff40ff" strokeWidth="1.4" />
        ))}
        <path d="M1172 32 L1175.5 28 L1179 32 L1175.5 36 Z" fill="none" stroke="#d00000" />
        <rect x="1184.5" y="28.5" width="7" height="8" fill="none" stroke="#d00000" />
        <line x1="1188.5" y1="28" x2="1188.5" y2="37" stroke="#d00000" />
        <line x1="845" y1="47" x2="857" y2="52" stroke={GREY} />
        <line x1="545" y1="392.5" x2="555" y2="392.5" stroke={GREY} />
      </g>
      <text x="858" y="56" fill={GREY} fontSize="12" letterSpacing="0.4">11.66</text>
      <text x="555" y="396" fill={GREY} fontSize="12" letterSpacing="0.4">5.99</text>
    </ChartSvg>
  );
}

function DateAxis() {
  const long = [[180, "10"], [339, "11"], [534, "12"], [719, "1"], [896, "2"]];
  const short = [220, 260, 299, 388, 437, 485, 580, 627, 673, 763, 808, 852, 929];
  return (
    <ChartSvg width="1177" height="18" viewBox="18 797 1177 18">
      <g shapeRendering="crispEdges">
        <line x1="18" y1="798.5" x2="1195" y2="798.5" stroke={LINE} />
        <line x1="18" y1="814.5" x2="1195" y2="814.5" stroke={LINE} />
        {long.map(([x]) => <line key={x} x1={x + 0.5} y1="799" x2={x + 0.5} y2="815" stroke={LINE} />)}
        {short.map((x) => <line key={x} x1={x + 0.5} y1="799" x2={x + 0.5} y2="803" stroke={LINE} />)}
        <rect x="960.5" y="799.5" width="78" height="15" fill="#000080" stroke={LINE} />
      </g>
      <text x="22" y="811" fill={RED} fontSize="12">2012年</text>
      {long.map(([x, t]) => <text key={x} x={x + 2} y="811" fill={RED} fontSize="12">{t}</text>)}
      <text x="962" y="811" fill={GREY} fontSize="12">2013/02/19/二</text>
    </ChartSvg>
  );
}

function PriceAxis() {
  const ticks = [];
  for (let i = 0; i < 24; i++) ticks.push({ y: Math.round(39.6 + i * 15.4), major: i % 2 === 1 });
  return (
    <ChartSvg width="49" height="646" viewBox="1196 24 49 646">
      <g shapeRendering="crispEdges">
        {ticks.map((t) => (
          <line key={t.y} x1="1196" y1={t.y + 0.5} x2={t.major ? 1201 : 1199} y2={t.y + 0.5} stroke={LINE} />
        ))}
        <rect x="1196" y="170.5" width="50" height="16" fill="#000080" stroke={LINE} />
        <line x1="1196" y1="411.5" x2="1245" y2="411.5" stroke={LINE} />
        <line x1="1196" y1="540.5" x2="1245" y2="540.5" stroke={LINE} />
      </g>
      {AXIS_LABELS.map(([t, y]) => (
        <text key={t} x="1244" y={y + 4} textAnchor="end" fill={RED} fontSize="12.5">{t}</text>
      ))}
      <text x="1197" y="183" fill={GREY} fontSize="12">9.35</text>
    </ChartSvg>
  );
}

function BookLine({ side, ord, price, vol, big, h, drop }) {
  return (
    <BookRow $h={h}>
      <span>{side}</span>
      <span>{ord}</span>
      <Num $c={RED} $size={big ? 17.5 : 14} $align="center" $drop={drop}>{price}</Num>
      <Num $c={OLIVE} $align="right">{vol}</Num>
    </BookRow>
  );
}

export default function App() {
  return (
    <Root>
      <GlobalStyle />
      <MenuBar>
        <AppIcon>
          <svg width="15" height="15" viewBox="0 0 15 15">
            <path d="M2 1 H13 L14 13 H1 Z" fill="#f08020" />
            <path d="M3 10 L7 6 L9 8 L13 3 L9 12 L7 9 Z" fill="#fff4c0" />
          </svg>
        </AppIcon>
        {["系统", "功能", "深度", "报价", "分析"].map((t) => <MenuItem key={t}>{t}</MenuItem>)}
        <MenuItem $w={85}>扩展市场行情</MenuItem>
        {["增强", "资讯", "工具", "帮助"].map((t) => <MenuItem key={t}>{t}</MenuItem>)}
        <MenuStatus>
          <MenuStat $w={71}>交易未登录</MenuStat>
          <MenuStat $w={54}>沙河股份</MenuStat>
          <MenuStat $w={91} $ls={-0.4}>2013年03月24日</MenuStat>
          <MenuStat $w={53}>16:50:47</MenuStat>
          <MenuStat $w={36}>星期日</MenuStat>
        </MenuStatus>
        <QuickButton $w={48} $ml={157}>闪电手</QuickButton>
        <QuickButton $w={50} $ml={4} $gap={14}><span>行</span><span>情</span></QuickButton>
        <QuickButton $w={50} $ml={4}>资讯</QuickButton>
      </MenuBar>

      <SpeedWidget>
        <SpeedDial>40%</SpeedDial>
        <SpeedRows>
          <SpeedRow><ArrowUp size={10} strokeWidth={3.5} color="#f07820" />0.6K/S</SpeedRow>
          <SpeedRow><ArrowDown size={10} strokeWidth={3.5} color="#208030" />0.2K/S</SpeedRow>
        </SpeedRows>
      </SpeedWidget>

      <Watermark>
        <WatermarkTop>
          <WatermarkCn>股海网</WatermarkCn>
          <WatermarkSlogan>股票软件资源分享</WatermarkSlogan>
        </WatermarkTop>
        <WatermarkUrl>Www.Guhai.com.cn</WatermarkUrl>
      </Watermark>
      <CenterMark>股海网 Www.Guhai.Com.CN</CenterMark>

      <Body>
        <LeftSide>
          <WorkRow>
            <Rail>
              <RailArrows><Triangle /><Triangle down /></RailArrows>
              {RAIL.map((tab, i) => (
                <RailTab key={i} $h={tab.h || 60} $active={tab.active}>
                  {tab.chars.map((c, j) => <span key={j}>{c}</span>)}
                </RailTab>
              ))}
            </Rail>
            <Center>
              <ChartPane>
                <MainChart />
                <Legend>
                  <LegendItem $w={83} $c={GREY}>沙河股份(日线)</LegendItem>
                  <LegendItem $w={58} $c="#fff">MA5: 8.76</LegendItem>
                  <LegendItem $w={65} $c="#ffff00">MA10: 8.76</LegendItem>
                  <LegendItem $w={65} $c="#ff00ff">MA20: 8.99</LegendItem>
                  <LegendItem $w={70} $c="#00ff00">MA60: 9.11</LegendItem>
                </Legend>
              </ChartPane>

              <PaneTitle $h={20} $line>X76资金分布(1) :-</PaneTitle>
              <FlowPane>
                <FlowLeft>
                  <NameRow>
                    <StockName>沙河股份</StockName>
                    <StockCode>000014</StockCode>
                  </NameRow>
                  <RatioLabels>
                    <RatioLabel $c="#e00000">买63.4%</RatioLabel>
                    <RatioLabel $c="#e00000" $top={5}>3373.16</RatioLabel>
                    <RatioLabel $c="#00ff00">卖36.6%</RatioLabel>
                  </RatioLabels>
                  <RatioRow>
                    <RatioValue $c="#e00000" $w={102}>7980.78</RatioValue>
                    <BigBar>
                      <BigRed $w={205} $split />
                      <BigRed $w={56} />
                      <BigGreen />
                    </BigBar>
                    <RatioValue $c="#00ff00" $ml={10}>4607.62</RatioValue>
                  </RatioRow>
                </FlowLeft>
                <FlowRight>
                  <FlowGrid>
                    {FLOW.map((f) => <FlowText key={f.name} $dx={f.vdx}>{f.value}</FlowText>)}
                  </FlowGrid>
                  <FlowPlot>
                    {FLOW.map((f) => <FlowBar key={f.name} $h={f.h} />)}
                  </FlowPlot>
                  <FlowNames>
                    {FLOW.map((f) => <FlowText key={f.name} $dx={f.dx}>{f.name}</FlowText>)}
                  </FlowNames>
                </FlowRight>
              </FlowPane>

              <PaneTitle $h={19}>X74资金数据</PaneTitle>
              <TableWrap>
                <DataTable>
                  <colgroup>
                    {COL_WIDTHS.map((w, i) => <TableCol key={i} $w={w} />)}
                  </colgroup>
                  <thead>
                    <TableRow>
                      {HEAD.map(([t, pad], i) => <HeadCell key={t} $pad={pad} $yellow={i === 5}>{t}</HeadCell>)}
                    </TableRow>
                  </thead>
                  <tbody>
                    {ROWS.map((row, r) => (
                      <TableRow key={r}>
                        {row.map((v, i) => {
                          const neg = v.startsWith("-");
                          const pad = (neg ? 27 : 39) + (i === 9 ? 12 : 0);
                          return <Cell key={i} $pad={i === 0 ? 38 : pad} $neg={neg} $yellow={i === 5}>{v}</Cell>;
                        })}
                      </TableRow>
                    ))}
                  </tbody>
                </DataTable>
              </TableWrap>

              <PaneTitle $h={19}>X73 资金流01 :-</PaneTitle>
              <FlowBoard>
                {CELLS.map((c) => (
                  <BoardCell key={c.day}>
                    <BoardHead $x={c.titleX} $w={c.titleW}>
                      <BoardTitle>{c.title}</BoardTitle>
                      <BoardDay>{c.day}</BoardDay>
                    </BoardHead>
                    <MiniRatio $x={c.barX}>
                      <MiniRed $w={c.red} $grad={c.grad} />
                      <MiniGreen $grad={c.grad} />
                    </MiniRatio>
                    <BoardCols $pad={c.pad} $first={c.first}>
                      {c.cols.map((col, i) => (
                        <BoardCol key={i}>
                          <BoardValue $dx={col.vdx} $mb={779 - CENTERS[i] - col.h}>{col.v}</BoardValue>
                          <BoardBar $h={col.h} $kind={col.kind} $dx={col.bdx} $w={col.bw} />
                          <BoardName $dx={col.ldx} $c={NAMES[i][1]}>{NAMES[i][0]}</BoardName>
                        </BoardCol>
                      ))}
                    </BoardCols>
                  </BoardCell>
                ))}
              </FlowBoard>
              <DateAxis />
              <ToolBar>
                {TOOLS.map(([t, w, mode]) => <ToolButton key={t} $w={w} $mode={mode}>{t}</ToolButton>)}
              </ToolBar>
            </Center>
            <AxisCol>
              <PriceAxis />
              <AxisBox />
              <AxisLabel>日线</AxisLabel>
              <ZoomRow>
                <ZoomButton>+</ZoomButton>
                <ZoomButton>-</ZoomButton>
                <ZoomButton>0</ZoomButton>
              </ZoomRow>
            </AxisCol>
          </WorkRow>
          <ExtRow>
            <ExtBar>
              {EXT.map(([t, w, gold]) => <ExtTab key={t} $w={w} $gold={gold}>{t}</ExtTab>)}
            </ExtBar>
            <F10Tab>图文F10</F10Tab>
          </ExtRow>
        </LeftSide>

        <Quote>
          <NameHead $h={33}>
            <span>沙河股份</span>
            <span>000014</span>
          </NameHead>
          <PriceRow $h={22}>
            <Num $c={RED} $size={17}>9.18<Unit>元</Unit></Num>
            <Num $c={RED} $size={16}>▲0.33</Num>
            <Num $c={RED} $size={16.5} $align="right">3.73%</Num>
          </PriceRow>
          <VolumeRow $h={20}>
            <span>现量</span>
            <Num $c="#c000c0" $align="right">1419</Num>
            <TotalLabel>总量</TotalLabel>
            <Num $align="right">141016</Num>
          </VolumeRow>
          <BookSide $h={93} $top={2}>
            {SELL.map(([o, p, v]) => <BookLine key={o} ord={o} price={p} vol={v} />)}
            <BookLine side="卖盘" ord="一" price="9.19" vol="443" big h={19} />
          </BookSide>
          <Divider><DividerRed /></Divider>
          <BuySection $h={92}>
            <BookLine side="买盘" ord="一" price="9.18" vol="173" big h={20} drop={4} />
            {BUY.map(([o, p, v]) => <BookLine key={o} ord={o} price={p} vol={v} />)}
          </BuySection>
          <Section $h={78} $top={1}>
            <StatRow>
              <StatCell><span>今开</span><Num $c="#fff">8.85</Num></StatCell>
              <StatCell><span>均价</span><Num $c={RED}>9.09</Num></StatCell>
            </StatRow>
            <StatRow>
              <StatCell><span>最高</span><Num $c={RED}>9.25</Num></StatCell>
              <StatCell><span>量比</span><Num $c={RED}>2.12</Num></StatCell>
            </StatRow>
            <StatRow>
              <StatCell><span>最低</span><Num $c="#00ff00">8.80</Num></StatCell>
              <StatCell><span>市值</span><Num>18.5<Unit>亿</Unit></Num></StatCell>
            </StatRow>
            <StatRow>
              <StatCell><span>外盘</span><Num $c={RED}>90369</Num></StatCell>
              <StatCell><span>内盘</span><Num $c="#00ff00">50647</Num></StatCell>
            </StatRow>
          </Section>
          <Section $h={77} $top={1}>
            <StatRow>
              <StatCell><span>涨停</span><Num $c={RED}>9.74</Num></StatCell>
              <StatCell><span>跌停</span><Num $c="#00ff00">7.97</Num></StatCell>
            </StatRow>
            <StatRow>
              <StatCell><span>换手</span><Num>6.99%</Num></StatCell>
              <StatCell><span>股本</span><Num>2.02<Unit>亿</Unit></Num></StatCell>
            </StatRow>
            <StatRow>
              <StatCell><span>净资</span><Num>2.67</Num></StatCell>
              <StatCell><span>流通</span><Num>2.02<Unit>亿</Unit></Num></StatCell>
            </StatRow>
            <StatRow>
              <StatCell><TightLabel>收益(三)</TightLabel><Num>-0.09</Num></StatCell>
              <StatCell><span>PE(动)</span><Num>—</Num></StatCell>
            </StatRow>
          </Section>
          <Trades>
            {TRADES.map(([t, p, v, f, n], i) => (
              <TradeRow key={i}>
                <Num>{t}</Num>
                <Num $c={RED}>{p}</Num>
                <Num $c={v === "1419" ? "#c000c0" : OLIVE} $align="right">{v}</Num>
                {f && <TradeFlag $flag={f}>{f}</TradeFlag>}
                <TradeCount>{n}</TradeCount>
              </TradeRow>
            ))}
          </Trades>
          <QuoteTabs>
            {["笔", "价", "细", "盘", "势", "指", "值", "筹"].map((t, i) => (
              <QuoteTab key={t} $on={i === 0}>{t}</QuoteTab>
            ))}
          </QuoteTabs>
        </Quote>
      </Body>

      <StatusBar>
        {STATUS.map(([t, w, k], i) => <StatusText key={i} $w={w} $kind={k}>{t}</StatusText>)}
        <StatusSep $mr={3} />
        <MiniMeter />
        <MiniMeter />
        <StatusSep $mr={0} />
        <StatusNote>招商证券深圳行情</StatusNote>
        <TrayIcons />
      </StatusBar>
    </Root>
  );
}
